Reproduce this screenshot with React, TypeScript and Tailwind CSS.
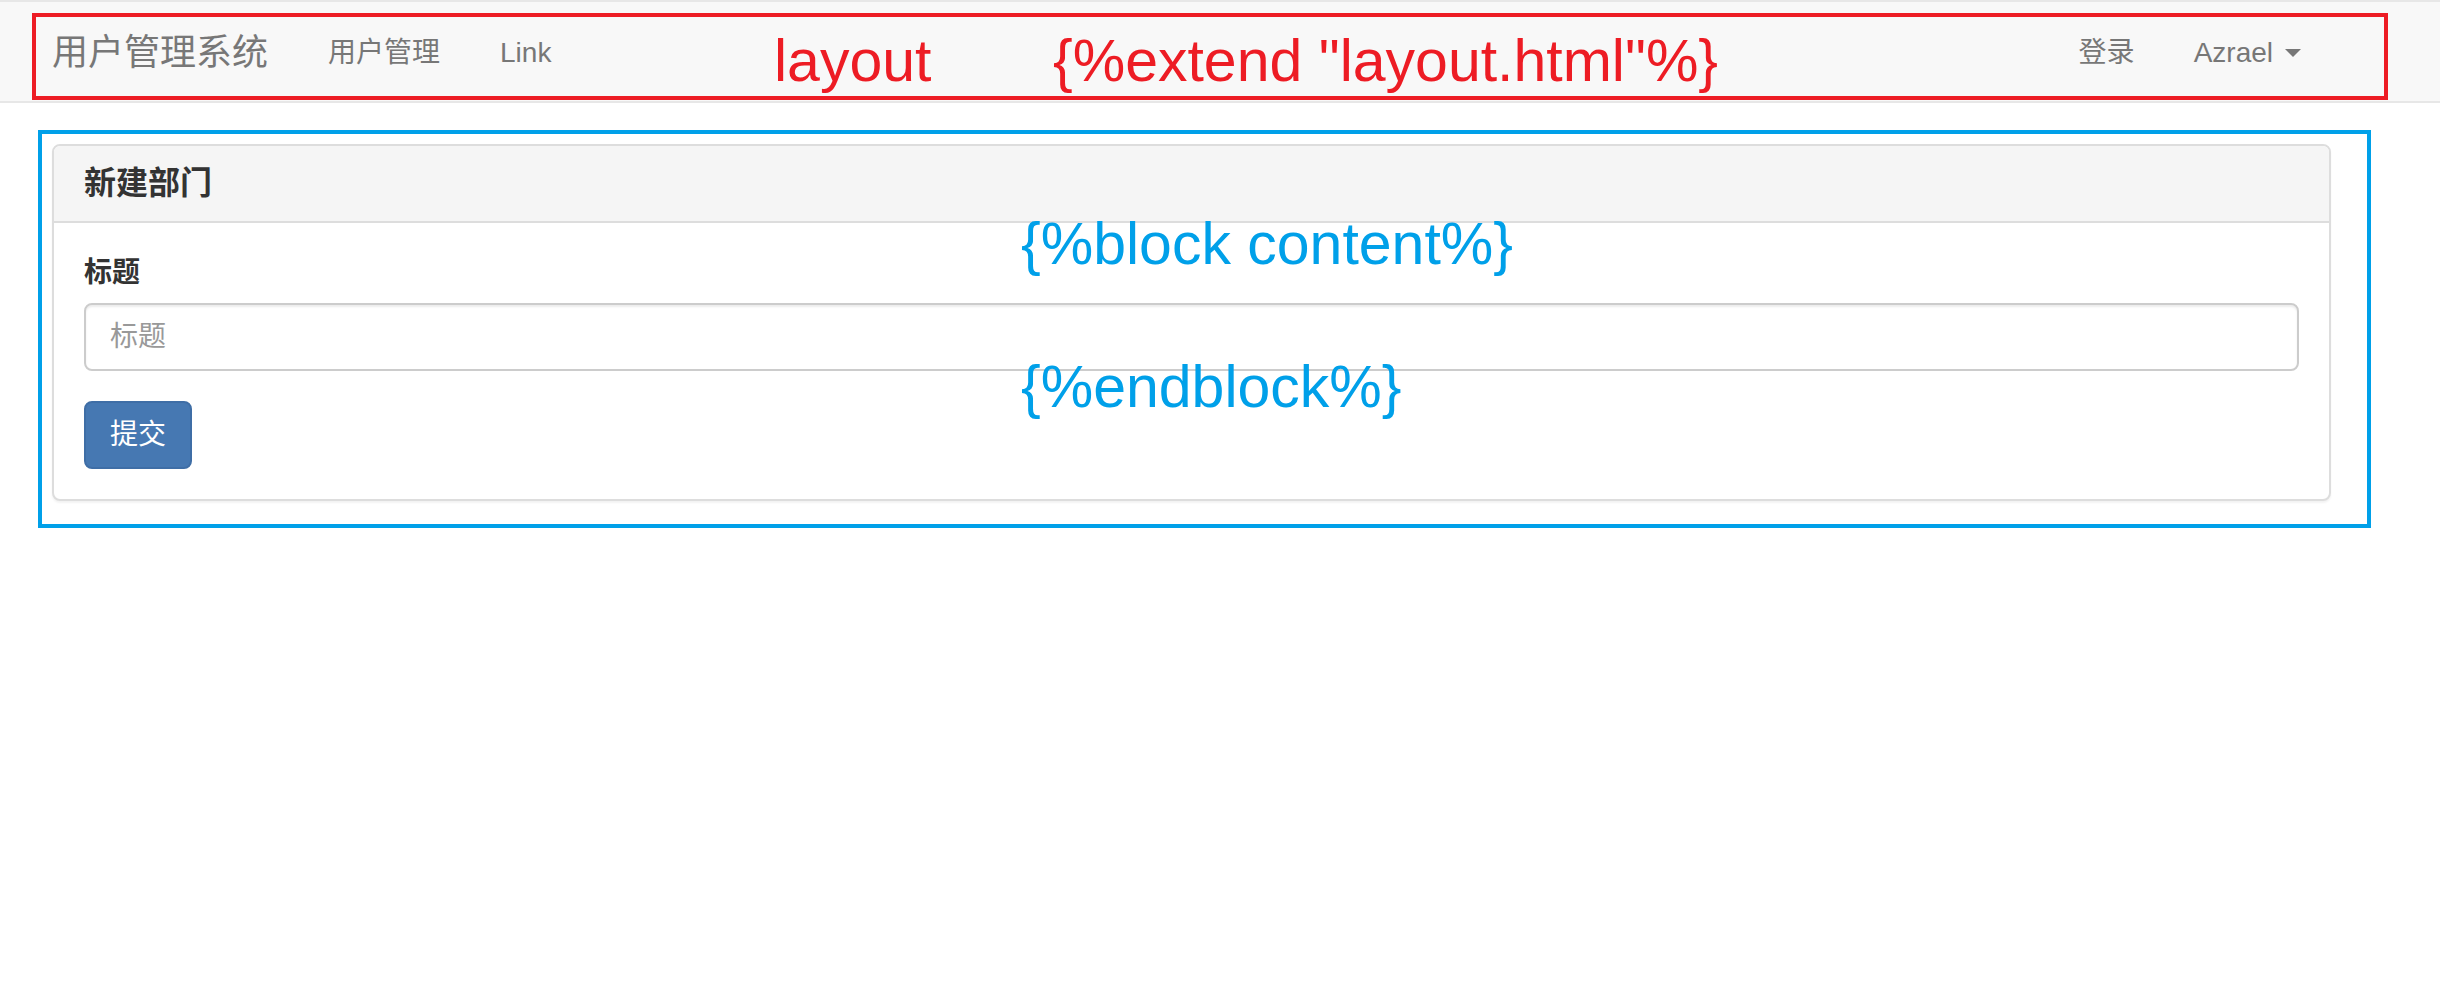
import React from 'react';

const FONT = "font-['Liberation_Sans','Noto_Sans_CJK_SC',sans-serif]";

function Navbar() {
  return (
    <nav className="h-[103px] border-y-2 border-[#e7e7e7] bg-[#f8f8f8] pt-[11px]">
      {/* red annotation frame: layout */}
      <div className="relative ml-[32px] flex h-[87px] w-[2356px] items-center border-4 border-[#ed1c24] pb-2 pl-[16px] pr-[83px] text-[#777]">
        <a className="text-[36px] leading-[50px]">用户管理系统</a>
        <a className="ml-[60px] text-[28px] leading-[40px]">用户管理</a>
        <a className="ml-[60px] text-[28px] leading-[40px]">Link</a>

        <div className="ml-auto flex items-center gap-[59px] text-[28px] leading-[40px]">
          <a>登录</a>
          <a className="flex items-center">
            Azrael
            <span className="ml-3 h-0 w-0 border-x-[8px] border-t-[8px] border-x-transparent border-t-[#777]" />
          </a>
        </div>

        <span className="pointer-events-none absolute left-[738px] top-[15px] text-[59px] leading-none text-[#ed1c24]">
          layout
        </span>
        <span className="pointer-events-none absolute left-[1017px] top-[15px] whitespace-nowrap text-[59px] leading-none text-[#ed1c24]">
          {'{%extend "layout.html"%}'}
        </span>
      </div>
    </nav>
  );
}

function NewDepartment() {
  return (
    <div className="rounded-[8px] border-2 border-[#ddd] bg-white shadow-[0_2px_2px_rgba(0,0,0,0.05)]">
      <div className="rounded-t-[6px] border-b-2 border-[#ddd] bg-[#f5f5f5] px-[30px] py-[20px]">
        <h3 className="text-[32px] font-semibold leading-[35px] text-[#333]">新建部门</h3>
      </div>
      <div className="p-[30px]">
        <div className="mb-[30px]">
          <label className="mb-[10px] block text-[28px] font-bold leading-[40px] text-[#333]">标题</label>
          <input
            placeholder="标题"
            className="block h-[68px] w-full rounded-[8px] border-2 border-[#ccc] bg-white px-[24px] text-[28px] text-[#555] shadow-[inset_0_2px_2px_rgba(0,0,0,0.075)] outline-none placeholder:text-[#999]"
          />
        </div>
        <button className="h-[68px] rounded-[8px] border-2 border-[#3f6ea6] bg-[#4678b2] px-[24px] text-[28px] leading-[40px] text-white">
          提交
        </button>
      </div>
    </div>
  );
}

export default function App() {
  return (
    <div className={`min-h-screen bg-white ${FONT}`}>
      <Navbar />

      {/* blue annotation frame: block content */}
      <div className="relative ml-[38px] mt-[27px] w-[2333px] border-4 border-[#00a0e9] pb-[23px] pl-[10px] pr-[36px] pt-[10px]">
        <NewDepartment />

        <span className="pointer-events-none absolute left-[979px] top-[81px] whitespace-nowrap text-[59px] leading-none text-[#00a0e9]">
          {'{%block content%}'}
        </span>
        <span className="pointer-events-none absolute left-[979px] top-[224px] whitespace-nowrap text-[59px] leading-none text-[#00a0e9]">
          {'{%endblock%}'}
        </span>
      </div>
    </div>
  );
}
